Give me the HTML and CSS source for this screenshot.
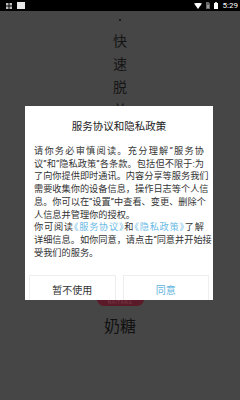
FILE: index.html
```html
<!DOCTYPE html>
<html lang="zh-CN">
<head>
<meta charset="utf-8">
<title>奶糖</title>
<link rel="stylesheet" href="styles.css">
</head>
<body>
<div class="statusbar">
  <div class="sb-left">
    <svg class="sb-grid" width="6" height="6" viewBox="0 0 6 6"><rect x="0" y="0" width="2.5" height="2.5" fill="#bbb"/><rect x="3.5" y="0" width="2.5" height="2.5" fill="#bbb"/><rect x="0" y="3.5" width="2.5" height="2.5" fill="#bbb"/><rect x="3.5" y="3.5" width="2.5" height="2.5" fill="#bbb"/></svg>
    <span class="sb-thumb"></span>
  </div>
  <div class="sb-right">
    <svg width="8" height="6" viewBox="0 0 8 6"><path d="M0 0.5 Q4 -0.8 8 0.5 L4 6 Z" fill="#fff"/></svg>
    <svg width="4" height="7" viewBox="0 0 4 7"><path d="M0 0 H2.6 L4 1.4 V7 H0 Z" fill="#666"/><rect x="1" y="3" width="2" height="3" fill="#999"/></svg>
    <svg width="4" height="7" viewBox="0 0 4 7"><rect x="1.2" y="0" width="1.6" height="1" fill="#fff"/><rect x="0" y="1" width="4" height="6" fill="#fff"/></svg>
    <span class="sb-time">5:29</span>
  </div>
</div>

<main class="page">
  <span class="dot"></span>
  <div class="slogan">
    <span>快</span><span>速</span><span>脱</span><span>单</span>
  </div>
  <div class="logo"><span class="logo-text">NAITANG</span></div>
  <div class="app-name">奶糖</div>
</main>

<div class="dialog">
  <div class="dlg-title">服务协议和隐私政策</div>
  <div class="dlg-body">
    <p class="para">
      <span class="ln">请你务必审慎阅读。充分理解“服务协</span>
      <span class="ln">议”和“隐私政策”各条款。包括但不限于:为</span>
      <span class="ln">了向你提供即时通讯。内容分享等服务我们</span>
      <span class="ln">需要收集你的设备信息，操作日志等个人信</span>
      <span class="ln">息。你可以在“设置”中查看、变更、删除个</span>
      <span class="ln last">人信息并管理你的授权。</span>
    </p>
    <p class="para">
      <span class="ln">你可阅读<span class="link">《服务协议》</span>和<span class="link">《隐私政策》</span>了解</span>
      <span class="ln">详细信息。如你同意，请点击“同意并开始接</span>
      <span class="ln last">受我们的服务。</span>
    </p>
  </div>
  <div class="dlg-actions">
    <div class="btn">暂不使用</div>
    <div class="btn btn-ok">同意</div>
  </div>
</div>
</body>
</html>
```

FILE: styles.css
```css
* { box-sizing: border-box; }
html, body { margin: 0; padding: 0; }
body {
  width: 240px;
  height: 400px;
  overflow: hidden;
  background: #464646;
  font-family: Roboto, "Noto Sans CJK SC", sans-serif;
  position: relative;
}

.statusbar {
  height: 11px;
  background: #000;
  display: flex;
  justify-content: space-between;
  align-items: center;
  padding: 0 2px 0 6px;
}
.sb-left { display: flex; align-items: center; gap: 5px; }
.sb-thumb { width: 8px; height: 7px; background: #e8e8e8; display: block; }
.sb-right { display: flex; align-items: center; gap: 4px; }
.sb-right svg { display: block; }
.sb-time { color: #fff; font-size: 8px; line-height: 11px; margin-left: 1px; }

.page {
  display: flex;
  flex-direction: column;
  align-items: center;
}
.dot {
  width: 2px; height: 2px; border-radius: 50%;
  background: #111;
  margin-top: 8px;
}
.slogan {
  margin-top: 9px;
  display: flex;
  flex-direction: column;
  align-items: center;
  font-size: 14px;
  line-height: 23px;
  color: #151515;
}
.logo {
  margin-top: 128px;
  width: 47px;
  height: 56px;
  border-radius: 7px;
  background: #5b1a28;
  display: flex;
  align-items: flex-end;
  justify-content: center;
  padding-bottom: 1px;
}
.logo-text { font-size: 5px; color: #7a3a48; letter-spacing: 0.5px; }
.app-name {
  margin-top: 10px;
  font-size: 16px;
  line-height: 22px;
  color: #111;
}

.dialog {
  position: absolute;
  left: 25px;
  top: 106px;
  width: 188px;
  height: 194px;
  background: #fff;
  overflow: hidden;
  display: flex;
  flex-direction: column;
}
.dlg-title {
  padding-top: 14px;
  font-size: 10.5px;
  line-height: 14px;
  text-align: center;
  color: #222;
}
.dlg-body {
  margin-top: 11px;
  padding: 0 9px;
  font-size: 9.2px;
  line-height: 12.7px;
  color: #333;
}
.para { margin: 0; }
.ln {
  display: block;
  white-space: nowrap;
  text-align: justify;
  text-align-last: justify;
}
.ln.last { text-align-last: left; }
.link { color: #6cbbe6; font-feature-settings: "halt"; }

.dlg-actions {
  margin-top: auto;
  height: 25px;
  display: flex;
  gap: 7px;
  padding: 0 4px;
}
.btn {
  flex: 1;
  border: 1px solid #eeeeee;
  border-bottom: none;
  padding-top: 9px;
  text-align: center;
  font-size: 10px;
  line-height: 12px;
  color: #333;
}
.btn-ok { color: #5fb4de; }
```
